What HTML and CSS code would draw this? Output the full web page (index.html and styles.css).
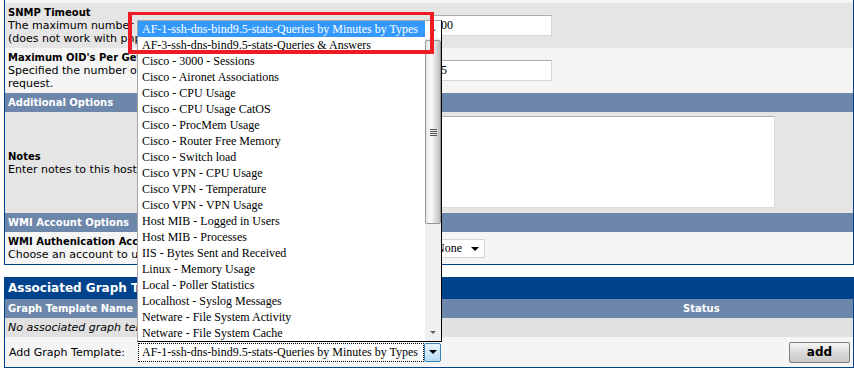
FILE: index.html
```html
<!DOCTYPE html>
<html>
<head>
<meta charset="utf-8">
<title>Host</title>
<link rel="stylesheet" href="styles.css">
</head>
<body>
<div class="page">
  <div class="tbl">
    <div class="strip"></div>
    <div class="row dark r45">
      <div class="lbl"><b>SNMP Timeout</b><br>The maximum number of milliseconds Cacti will wait for an SNMP response<br>(does not work with php-snmp support).</div>
      <div class="fld"><div class="txt">500</div></div>
    </div>
    <div class="row light r45">
      <div class="lbl"><b>Maximum OID's Per Get Request</b><br>Specified the number of OID's that can be obtained in a single SNMP Get<br>request.</div>
      <div class="fld"><div class="txt">25</div></div>
    </div>
    <div class="hdr">Additional Options</div>
    <div class="row dark rnotes">
      <div class="lbl"><b>Notes</b><br>Enter notes to this host.</div>
      <div class="fld"><div class="area"></div></div>
    </div>
    <div class="hdr">WMI Account Options</div>
    <div class="row light rwmi">
      <div class="lbl"><b>WMI Authenication Account</b><br>Choose an account to use when authenticating via WMI.</div>
      <div class="fld"><div class="sel">None<span class="tri"></span></div></div>
    </div>
  </div>

  <div class="tbl2">
    <div class="ghdr">Associated Graph Templates</div>
    <div class="cols">
      <div class="c1">Graph Template Name</div>
      <div class="c2">Status</div>
    </div>
    <div class="empty">No associated graph templates.</div>
    <div class="addrow">
      <div class="addlbl">Add Graph Template:</div>
      <div class="combo">
        <div class="combotext">AF-1-ssh-dns-bind9.5-stats-Queries by Minutes by Types</div>
        <div class="combobtn"><span class="tri"></span></div>
      </div>
      <div class="spacer"></div>
      <div class="btn">add</div>
    </div>
  </div>

  <div class="popup">
    <div class="items">
      <div class="item sel-item">AF-1-ssh-dns-bind9.5-stats-Queries by Minutes by Types</div>
      <div class="item">AF-3-ssh-dns-bind9.5-stats-Queries &amp; Answers</div>
      <div class="item">Cisco - 3000 - Sessions</div>
      <div class="item">Cisco - Aironet Associations</div>
      <div class="item">Cisco - CPU Usage</div>
      <div class="item">Cisco - CPU Usage CatOS</div>
      <div class="item">Cisco - ProcMem Usage</div>
      <div class="item">Cisco - Router Free Memory</div>
      <div class="item">Cisco - Switch load</div>
      <div class="item">Cisco VPN - CPU Usage</div>
      <div class="item">Cisco VPN - Temperature</div>
      <div class="item">Cisco VPN - VPN Usage</div>
      <div class="item">Host MIB - Logged in Users</div>
      <div class="item">Host MIB - Processes</div>
      <div class="item">IIS - Bytes Sent and Received</div>
      <div class="item">Linux - Memory Usage</div>
      <div class="item">Local - Poller Statistics</div>
      <div class="item">Localhost - Syslog Messages</div>
      <div class="item">Netware - File System Activity</div>
      <div class="item">Netware - File System Cache</div>
    </div>
    <div class="sbar">
      <div class="sbtn"><span class="up"></span></div>
      <div class="strack">
        <div class="thumb"><span class="grip"></span></div>
      </div>
      <div class="sbtn"><span class="down"></span></div>
    </div>
  </div>

  <div class="redbox"></div>
</div>
</body>
</html>
```

FILE: styles.css
```css
* { box-sizing: border-box; }
html, body { margin: 0; padding: 0; background: #fff; }
body {
  font-family: "DejaVu Sans", Verdana, sans-serif;
  font-size: 11px;
  color: #000;
}
.page { position: relative; width: 854px; height: 371px; overflow: hidden; }

.tbl {
  margin-left: 4px;
  width: 850px;
  border: 1px solid #00438c;
  border-top: 0;
}
.strip { height: 3px; background: #f5f5f5; }
.row { display: flex; align-items: center; }
.dark { background: #e5e5e5; }
.light { background: #f5f5f5; }
.r45 { height: 45px; }
.rnotes { height: 101px; }
.rwmi { height: 32px; }
.lbl {
  width: 424px;
  padding: 0 3px;
  white-space: nowrap;
  overflow: hidden;
  line-height: 13px;
}
.lbl b { font-size: 10px; }
.fld { flex: 1; padding: 0 3px; display: flex; align-items: center; }

.hdr {
  background: #6d87ab;
  color: #fff;
  font-weight: bold;
  font-size: 10px;
  height: 19px;
  line-height: 19px;
  padding: 0 3px;
}

.txt, .sel, .combotext, .item {
  font-family: "Liberation Serif", "Times New Roman", serif;
  font-size: 12px;
}
.txt {
  width: 120px;
  height: 21px;
  line-height: 19px;
  background: #fff;
  border: 1px solid #d6d6d6;
  border-top-color: #acacac;
  padding-left: 2px;
}
.area {
  width: 343px;
  height: 92px;
  margin-top: -1px;
  background: #fff;
  border: 1px solid #dcdcdc;
  border-top-color: #b0b0b0;
}
.sel {
  position: relative;
  width: 53px;
  height: 19px;
  line-height: 17px;
  background: #fff;
  border: 1px solid #d6d6d6;
  padding-left: 3px;
}
.sel .tri { position: absolute; right: 5px; top: 7px; }
.tri {
  display: block;
  width: 0; height: 0;
  border-left: 4px solid transparent;
  border-right: 4px solid transparent;
  border-top: 4px solid #000;
}

.tbl2 {
  margin: 12px 0 0 4px;
  width: 850px;
  border: 1px solid #00438c;
}
.ghdr {
  background: #00438c;
  color: #fff;
  font-weight: bold;
  font-size: 12px;
  height: 21px;
  line-height: 20px;
  padding: 0 3px;
}
.cols {
  display: grid;
  grid-template-columns: 675px 1fr;
  background: #6d87ab;
  color: #fff;
  font-weight: bold;
  font-size: 10px;
  height: 19px;
  line-height: 19px;
}
.c1, .c2 { padding: 0 3px; }
.empty {
  background: #e1e1e1;
  font-style: italic;
  height: 19px;
  line-height: 19px;
  padding: 0 3px;
}
.addrow {
  display: flex;
  align-items: center;
  background: #f5f5f5;
  height: 30px;
}
.addlbl { width: 133px; padding-left: 4px; }
.combo { display: flex; width: 303px; height: 19px; }
.combotext {
  flex: 1;
  background: #fff;
  border: 1px dotted #000;
  line-height: 17px;
  padding-left: 3px;
  white-space: nowrap;
  overflow: hidden;
}
.combobtn {
  width: 17px;
  border: 1px solid #3c7fb1;
  border-radius: 2px;
  background: linear-gradient(#e8f5fd, #b6dcf5);
  display: flex;
  align-items: center;
  justify-content: center;
}
.spacer { flex: 1; }
.btn {
  width: 61px;
  height: 21px;
  margin-right: 3px;
  border: 1px solid #7e7e7e;
  border-radius: 2px;
  background: linear-gradient(#f6f6f6, #dadada 50%, #c9c9c9);
  font-weight: bold;
  font-size: 12px;
  text-align: center;
  line-height: 19px;
}

.popup {
  position: absolute;
  left: 137px;
  top: 20px;
  width: 305px;
  height: 322px;
  display: flex;
  background: #fff;
  border: 1px solid #000;
  border-left-color: #a5a5a5;
  border-top-color: #a5a5a5;
}
.items { width: 287px; }
.item {
  height: 16px;
  line-height: 16px;
  padding-left: 4px;
  white-space: nowrap;
  overflow: hidden;
}
.sel-item { background: #3399ff; color: #fff; }
.sbar {
  width: 16px;
  display: flex;
  flex-direction: column;
  background: #f0f0f0;
}
.sbtn {
  height: 17px;
  display: flex;
  align-items: center;
  justify-content: center;
}
.sbtn:first-child { background: #fff; }
.up, .down {
  display: block;
  width: 0; height: 0;
  border-left: 3px solid transparent;
  border-right: 3px solid transparent;
}
.up { border-bottom: 3px solid #606060; }
.down { border-top: 3px solid #606060; }
.strack { flex: 1; padding-top: 2px; }
.thumb {
  height: 184px;
  border: 1px solid #979797;
  border-radius: 2px;
  background: linear-gradient(90deg, #e6e6e6, #fafafa 35%, #dcdcdc 70%, #bdbdbd);
  display: flex;
  align-items: center;
  justify-content: center;
}
.grip {
  display: block;
  width: 7px;
  height: 7px;
  background: repeating-linear-gradient(#555 0 1px, transparent 1px 2px);
}

.redbox {
  position: absolute;
  left: 128px;
  top: 12px;
  width: 306px;
  height: 42px;
  border: 4px solid #ed1c24;
  border-top-width: 3px;
}
```
